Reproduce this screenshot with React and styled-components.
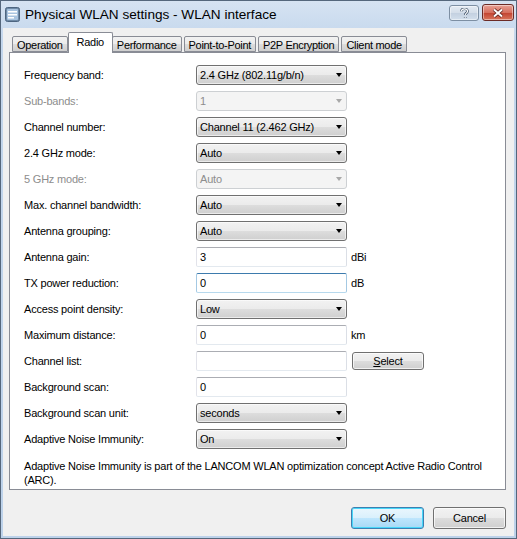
import React from "react";
import styled, { createGlobalStyle } from "styled-components";

const GlobalStyle = createGlobalStyle`
  html, body {
    margin: 0;
    padding: 0;
    background: #fff;
  }
  body {
    font-family: "Liberation Sans", Arial, sans-serif;
  }
`;

const Window = styled.div`
  width: 517px;
  height: 539px;
  box-sizing: border-box;
  border: 1px solid #55677c;
  background: linear-gradient(#d6e3f2, #c3d6ec 40px, #bdd2ea);
  display: flex;
  flex-direction: column;
`;

const TitleBar = styled.div`
  height: 27px;
  display: flex;
  align-items: flex-start;
  padding: 0 2px 0 4px;
`;

const TitleIcon = styled.svg`
  margin-top: 6px;
  flex: none;
`;

const TitleText = styled.div`
  margin: 6px 0 0 5px;
  font-size: 13.6px;
  color: #000;
  white-space: nowrap;
`;

const CaptionButtons = styled.div`
  margin-left: auto;
  display: flex;
  gap: 3px;
  margin-top: 3px;
`;

const CaptionButton = styled.div`
  width: ${(p) => (p.$close ? 32 : 30)}px;
  height: ${(p) => (p.$close ? 17 : 16)}px;
  margin-top: ${(p) => (p.$close ? 0 : 1)}px;
  box-sizing: border-box;
  border: 1px solid ${(p) => (p.$close ? "#6b2b26" : "#7d8fa3")};
  border-radius: 3px;
  background: ${(p) =>
    p.$close
      ? "linear-gradient(#e8a197, #d6705f 50%, #c1412f 51%, #d8755c)"
      : "linear-gradient(#e4ebf3, #d3dde9 50%, #c3d0e0 51%, #d3dfec)"};
  display: flex;
  align-items: center;
  justify-content: center;
  box-shadow: inset 0 0 0 1px rgba(255, 255, 255, 0.45);
`;

const Client = styled.div`
  flex: 1;
  margin: 0 2px 2px 2px;
  background: #f0f0f0;
  display: flex;
  flex-direction: column;
  padding: 4px 8px 0 6px;
  font-size: 11px;
  letter-spacing: -0.2px;
`;

const TabStrip = styled.div`
  height: 20px;
  display: flex;
  align-items: flex-end;
  padding-left: 3px;
  position: relative;
  z-index: 1;
`;

const Tab = styled.div`
  box-sizing: border-box;
  height: ${(p) => (p.$active ? 21 : 16)}px;
  margin: ${(p) => (p.$active ? "0 -1px -1px -2px" : "0 2px 0 0")};
  padding: ${(p) => (p.$active ? "3px 8px 0" : "2px 4px 0")};
  border: 1px solid #898c95;
  border-bottom: ${(p) => (p.$active ? "none" : "1px solid #898c95")};
  border-radius: 2px 2px 0 0;
  background: ${(p) =>
    p.$active ? "#fff" : "linear-gradient(#f2f2f2, #ebebeb 50%, #dddddd 51%, #cfcfcf)"};
  color: #000;
  font-size: 11px;
  letter-spacing: -0.3px;
  white-space: nowrap;
  position: relative;
  z-index: ${(p) => (p.$active ? 2 : 1)};
`;

const Panel = styled.div`
  height: 438px;
  box-sizing: border-box;
  border: 1px solid #898c95;
  background: #fff;
  padding: 12px 14px 0 14px;
`;

const Form = styled.div`
  display: grid;
  grid-template-columns: 172px 151px 1fr;
  grid-auto-rows: 20px;
  row-gap: 6px;
  align-items: center;
`;

const Label = styled.div`
  color: ${(p) => (p.$disabled ? "#8d8d8d" : "#000")};
  white-space: nowrap;
`;

const Combo = styled.div`
  height: 20px;
  box-sizing: border-box;
  border: 1px solid ${(p) => (p.$disabled ? "#cdd0d3" : "#707070")};
  border-radius: 3px;
  background: ${(p) =>
    p.$disabled
      ? "#f4f4f4"
      : "linear-gradient(#f2f2f2, #ebebeb 50%, #dddddd 51%, #cfcfcf)"};
  color: ${(p) => (p.$disabled ? "#8d8d8d" : "#000")};
  display: flex;
  align-items: center;
  padding-left: 3px;
  position: relative;
  white-space: nowrap;
  box-shadow: ${(p) => (p.$disabled ? "none" : "inset 0 0 0 1px rgba(255,255,255,0.6)")};

  &::after {
    content: "";
    position: absolute;
    right: 4px;
    top: 7px;
    border-left: 3.5px solid transparent;
    border-right: 3.5px solid transparent;
    border-top: 4px solid ${(p) => (p.$disabled ? "#a8a8a8" : "#000")};
  }
`;

const TextBox = styled.div`
  height: 20px;
  box-sizing: border-box;
  border: 1px solid;
  border-color: ${(p) =>
    p.$focused ? "#3d7bad #a4c9e3 #b7d9ed #a4c9e3" : "#abadb3 #dbdfe6 #e3e9ef #e2e3ea"};
  border-radius: 2px;
  background: #fff;
  display: flex;
  align-items: center;
  padding-left: 3px;
`;

const Unit = styled.div`
  padding-left: 4px;
  display: flex;
  align-items: center;
`;

const PushButton = styled.div`
  box-sizing: border-box;
  width: ${(p) => p.$w || 73}px;
  height: ${(p) => p.$h || 22}px;
  border: 1px solid ${(p) => (p.$default ? "#3c7fb1" : "#707070")};
  border-radius: 3px;
  background: ${(p) =>
    p.$default
      ? "linear-gradient(#eaf6fd, #d9f0fc 50%, #bee6fd 51%, #a7d9f5)"
      : "linear-gradient(#f2f2f2, #ebebeb 50%, #dddddd 51%, #cfcfcf)"};
  box-shadow: inset 0 0 0 1px ${(p) => (p.$default ? "#48d7f9" : "rgba(255,255,255,0.7)")};
  display: flex;
  align-items: center;
  justify-content: center;
  color: #000;

  u {
    text-decoration: underline;
  }
`;

const SmallButton = styled(PushButton)`
  margin-left: 1px;
`;

const Note = styled.div`
  margin-top: 10px;
  line-height: 14px;
  color: #000;
`;

const Footer = styled.div`
  display: flex;
  justify-content: flex-end;
  gap: 9px;
  padding-top: 17px;
`;

const fields = [
  { label: "Frequency band:", kind: "combo", value: "2.4 GHz (802.11g/b/n)" },
  { label: "Sub-bands:", kind: "combo", value: "1", disabled: true },
  { label: "Channel number:", kind: "combo", value: "Channel 11 (2.462 GHz)" },
  { label: "2.4 GHz mode:", kind: "combo", value: "Auto" },
  { label: "5 GHz mode:", kind: "combo", value: "Auto", disabled: true },
  { label: "Max. channel bandwidth:", kind: "combo", value: "Auto" },
  { label: "Antenna grouping:", kind: "combo", value: "Auto" },
  { label: "Antenna gain:", kind: "text", value: "3", unit: "dBi" },
  { label: "TX power reduction:", kind: "text", value: "0", unit: "dB", focused: true },
  { label: "Access point density:", kind: "combo", value: "Low" },
  { label: "Maximum distance:", kind: "text", value: "0", unit: "km" },
  { label: "Channel list:", kind: "text", value: "", button: true },
  { label: "Background scan:", kind: "text", value: "0" },
  { label: "Background scan unit:", kind: "combo", value: "seconds" },
  { label: "Adaptive Noise Immunity:", kind: "combo", value: "On" },
];

const tabs = ["Operation", "Radio", "Performance", "Point-to-Point", "P2P Encryption", "Client mode"];

const WindowIcon = () => (
  <TitleIcon width="15" height="15" viewBox="0 0 15 15">
    <rect x="0.5" y="0.5" width="14" height="14" rx="2" fill="#6f8aa6" stroke="#4d6580" />
    <rect x="2" y="2" width="11" height="11" rx="1" fill="#a9c4e0" />
    <rect x="3" y="4" width="9" height="1.5" fill="#fff" />
    <rect x="3" y="7" width="9" height="1.5" fill="#fff" />
    <rect x="3" y="10" width="6" height="1.5" fill="#fff" />
  </TitleIcon>
);

const App = () => {
  return (
    <>
      <GlobalStyle />
      <Window>
        <TitleBar>
          <WindowIcon />
          <TitleText>Physical WLAN settings - WLAN interface</TitleText>
          <CaptionButtons>
            <CaptionButton>
              <svg width="9" height="11" viewBox="0 0 9 11">
                <path
                  d="M1.5 3.2 C1.5 1.3 3 0.8 4.5 0.8 C6.3 0.8 7.5 1.8 7.5 3.2 C7.5 5 5.2 5.2 5.2 7 M5.2 9 L5.2 10"
                  fill="none"
                  stroke="#3b4d63"
                  strokeWidth="2.6"
                />
                <path
                  d="M1.5 3.2 C1.5 1.3 3 0.8 4.5 0.8 C6.3 0.8 7.5 1.8 7.5 3.2 C7.5 5 5.2 5.2 5.2 7 M5.2 9 L5.2 10"
                  fill="none"
                  stroke="#fff"
                  strokeWidth="1.2"
                />
              </svg>
            </CaptionButton>
            <CaptionButton $close>
              <svg width="12" height="10" viewBox="0 0 12 10">
                <path d="M2 1.5 L10 8.5 M10 1.5 L2 8.5" stroke="#5a1f1a" strokeWidth="3.6" />
                <path d="M2 1.5 L10 8.5 M10 1.5 L2 8.5" stroke="#fff" strokeWidth="2" />
              </svg>
            </CaptionButton>
          </CaptionButtons>
        </TitleBar>
        <Client>
          <TabStrip>
            {tabs.map((t) => (
              <Tab key={t} $active={t === "Radio"}>
                {t}
              </Tab>
            ))}
          </TabStrip>
          <Panel>
            <Form>
              {fields.map((f) => (
                <React.Fragment key={f.label}>
                  <Label $disabled={f.disabled}>{f.label}</Label>
                  {f.kind === "combo" ? (
                    <Combo $disabled={f.disabled}>{f.value}</Combo>
                  ) : (
                    <TextBox $focused={f.focused}>{f.value}</TextBox>
                  )}
                  {f.button ? (
                    <Unit>
                      <SmallButton $w={72} $h={18}>
                        <span>
                          <u>S</u>elect
                        </span>
                      </SmallButton>
                    </Unit>
                  ) : (
                    <Unit>{f.unit || ""}</Unit>
                  )}
                </React.Fragment>
              ))}
            </Form>
            <Note>
              Adaptive Noise Immunity is part of the LANCOM WLAN optimization concept Active Radio Control
              (ARC).
            </Note>
          </Panel>
          <Footer>
            <PushButton $default>OK</PushButton>
            <PushButton>Cancel</PushButton>
          </Footer>
        </Client>
      </Window>
    </>
  );
};

export default App;
